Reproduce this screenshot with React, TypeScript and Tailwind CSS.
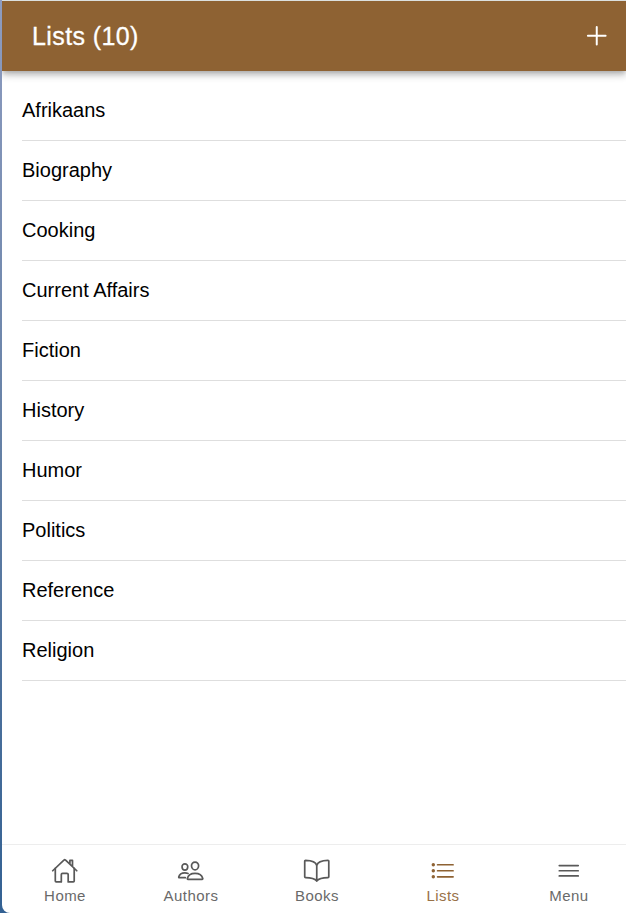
import { IoAdd, IoBookOutline, IoHomeOutline, IoListOutline, IoMenuOutline, IoPeopleOutline } from 'react-icons/io5';
import type { IconType } from 'react-icons';

const lists: string[] = [
  'Afrikaans', 'Biography', 'Cooking', 'Current Affairs', 'Fiction',
  'History', 'Humor', 'Politics', 'Reference', 'Religion',
];

const tabs: { label: string; icon: IconType; active?: boolean }[] = [
  { label: 'Home', icon: IoHomeOutline },
  { label: 'Authors', icon: IoPeopleOutline },
  { label: 'Books', icon: IoBookOutline },
  { label: 'Lists', icon: IoListOutline, active: true },
  { label: 'Menu', icon: IoMenuOutline },
];

export default function App() {
  return (
    <div className="h-[913px] w-[626px] overflow-hidden bg-linear-to-b from-[#8e9cc0] via-[#6480a5] to-[#336193] pl-0.5 font-['Liberation_Sans',Arial,sans-serif]">
      <div className="flex h-full flex-col overflow-hidden rounded-bl-[8px] bg-white">
        <header className="z-10 flex h-[71px] shrink-0 items-center justify-between border-t border-[#dce0df] bg-[#8e6233] pr-[13.5px] pl-[30px] text-white shadow-[0_2px_5px_-1px_rgba(0,0,0,0.2),0_5px_6px_0_rgba(0,0,0,0.14),0_1px_12px_0_rgba(0,0,0,0.12)]">
          <h1 className="text-[25px] leading-[30px] tracking-[0.016em] [-webkit-text-stroke:0.3px_white]">Lists (10)</h1>
          <button type="button" aria-label="Add list">
            <IoAdd className="size-[31.5px]" />
          </button>
        </header>
        <main className="flex-1 pt-2.5">
          <ul className="pl-5">
            {lists.map((name) => (
              <li key={name} className="flex h-[60px] items-center border-b border-[#dedede] pb-0.5 text-[20px] leading-6 text-black">
                {name}
              </li>
            ))}
          </ul>
        </main>
        <nav className="flex h-[69px] shrink-0 border-t border-[#ededed]">
          {tabs.map(({ label, icon: Icon, active }) => (
            <button
              key={label}
              type="button"
              className={`flex w-[126px] shrink-0 flex-col items-center pt-[12px] ${active ? 'text-[#8e6233]' : 'text-[#595959]'}`}
            >
              <Icon className="mb-[1.5px] size-[27.5px]" />
              <span className="text-[15px] leading-[20px] tracking-[0.03em] opacity-90">{label}</span>
            </button>
          ))}
        </nav>
      </div>
    </div>
  );
}
